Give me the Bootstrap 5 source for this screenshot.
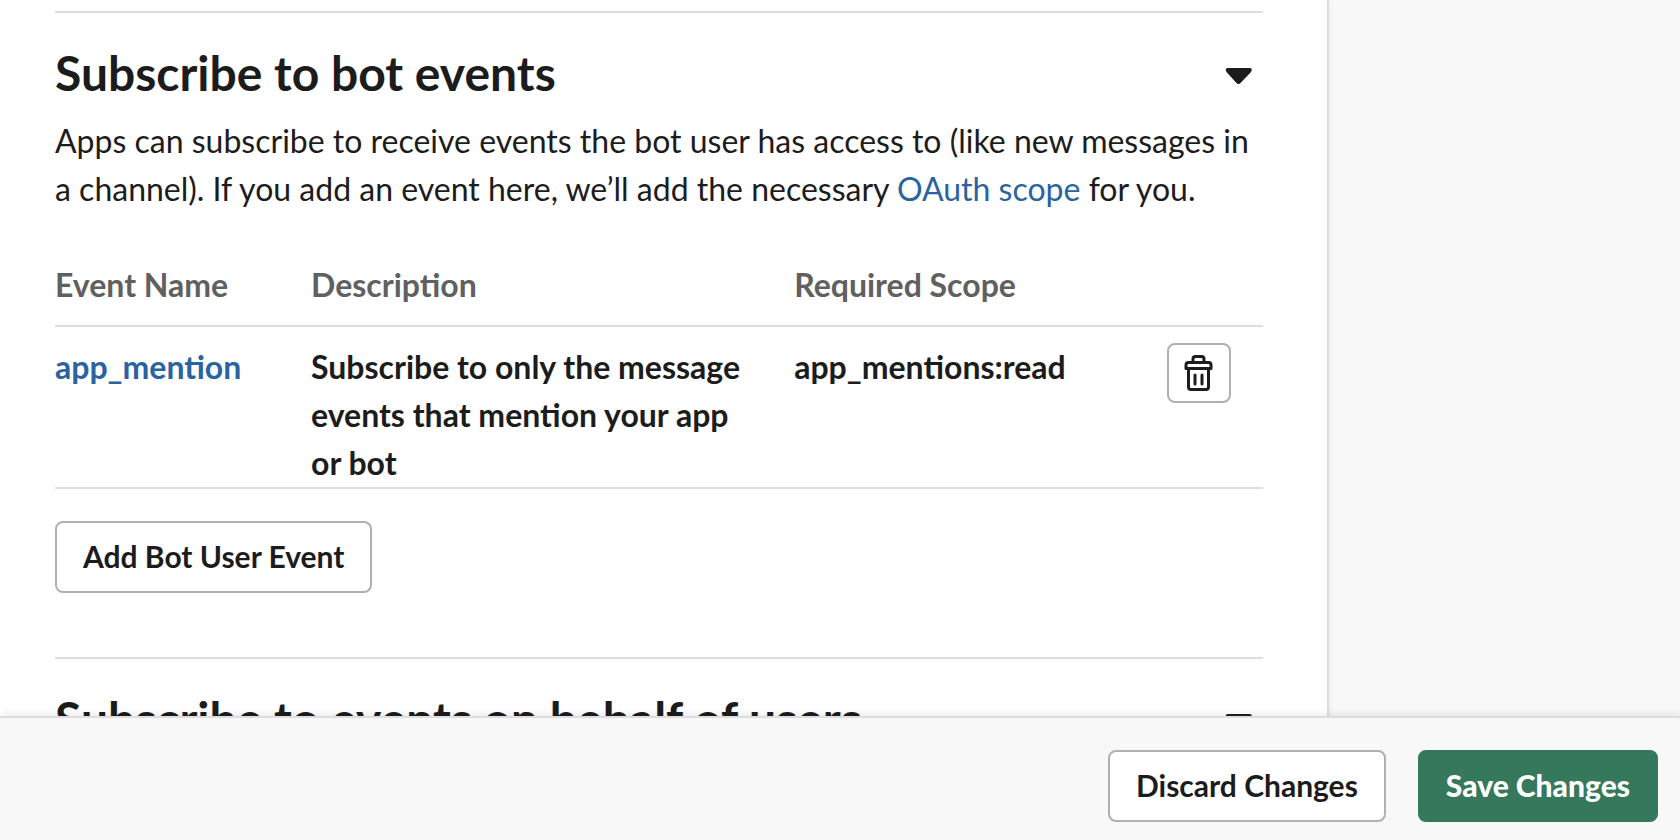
<!DOCTYPE html>
<html lang="en">
<head>
<meta charset="utf-8">
<meta name="viewport" content="width=device-width, initial-scale=1">
<title>Event Subscriptions</title>
<link href="https://cdn.jsdelivr.net/npm/bootstrap@5.3.0/dist/css/bootstrap.min.css" rel="stylesheet">
<style>
:root { --ink: #1d1c1d; --rule: #dddddd; --outline: #b0b0b0; --link: #2a639f; --panel: #f8f8f8; }
body { font-family: Lato, "Liberation Sans", sans-serif; font-size: 32px; line-height: 48px; color: var(--ink); background: var(--panel); }
a { color: var(--link); text-decoration: none; }
.page-side { width: 351px; }
.settings { padding: 11px 64px 64px 55px; border-right: 2px solid var(--rule); box-shadow: 0 0 6px rgba(0, 0, 0, .06); }
.event-group { border-top: 2px solid var(--rule); padding: 29px 0 64px; }
.event-group h2 { font-size: 48px; line-height: 62px; font-weight: 700; }
.event-group p { margin: 13px 0 48px; }
.caret { width: 50px; height: 32px; }
.event-table { --bs-table-color: var(--ink); --bs-table-bg: transparent; table-layout: fixed; margin-bottom: 32px; color: var(--ink); border-color: var(--rule); }
.event-table th, .event-table td { padding: 0; border-bottom: 2px solid var(--rule); font-weight: 700; vertical-align: top; }
.event-table th { color: #616061; padding-bottom: 16px; }
.event-table td { padding-top: 16px; }
.event-table .name-col { width: 256px; }
.event-table .text-col { width: 40%; }
.event-table .tool-col { width: 96px; }
.event-table .text-cell { padding-right: 48px; }
.btn { --bs-btn-font-size: 30px; --bs-btn-line-height: 44px; --bs-btn-font-weight: 700; --bs-btn-border-width: 2px; --bs-btn-border-radius: 8px; padding: 11px 26px 13px; font-weight: 700; }
.btn-plain { --bs-btn-color: var(--ink); --bs-btn-bg: #fff; --bs-btn-border-color: var(--outline); --bs-btn-hover-color: var(--ink); --bs-btn-hover-bg: #f8f8f8; --bs-btn-hover-border-color: var(--outline); }
.btn-save { --bs-btn-color: #fff; --bs-btn-bg: #35785b; --bs-btn-border-color: #35785b; --bs-btn-hover-color: #fff; --bs-btn-hover-bg: #2c664d; --bs-btn-hover-border-color: #2c664d; font-weight: 900; }
.btn-tool { width: 64px; height: 60px; padding: 0; }
.save-bar { z-index: 2; gap: 32px; padding: 32px 22px 18px; background: var(--panel); border-top: 2px solid var(--rule); box-shadow: 0 0 10px rgba(0, 0, 0, .12); }
</style>
</head>
<body>
<div class="vh-100 d-flex flex-column">
  <div class="flex-grow-1 d-flex overflow-hidden">
    <main class="settings bg-white flex-grow-1 align-self-start">
      <section class="event-group">
        <div class="d-flex justify-content-between align-items-center">
          <h2 class="mb-0">Subscribe to bot events</h2>
          <button class="caret border-0 bg-transparent p-0 d-flex" type="button" aria-label="Collapse bot events">
            <svg width="50" height="32" viewBox="0 0 50 32"><path d="M15 11h21.500q3.500 0 1.500 4l-10 10.500q-2.500 3-5 0l-9.500-10.500q-2-4 1.500-4z" fill="#1d1c1d"/></svg>
          </button>
        </div>
        <p>Apps can subscribe to receive events the bot user has access to (like new messages in a channel). If you add an event here, we’ll add the necessary <a href="#">OAuth scope</a> for you.</p>
        <table class="table event-table">
          <thead>
            <tr><th class="name-col" scope="col">Event Name</th><th class="text-col" scope="col">Description</th><th scope="col">Required Scope</th><th class="tool-col"></th></tr>
          </thead>
          <tbody>
            <tr>
              <td><a href="#">app_mention</a></td>
              <td class="text-cell">Subscribe to only the message events that mention your app or bot</td>
              <td>app_mentions:read</td>
              <td>
                <button class="btn btn-plain btn-tool d-flex align-items-center justify-content-center" type="button" aria-label="Delete app_mention">
                  <svg width="30" height="36" viewBox="0 0 30 36" fill="none" stroke="#1d1c1d" stroke-width="3" stroke-linecap="round" stroke-linejoin="round"><path d="M9 7V4q0-2.500 2.500-2.500h6q2.500 0 2.500 2.500v3M2 13.500V10q0-2.500 2.500-2.500h20q2.500 0 2.500 2.500v3.500zM4.500 14v18q0 2.500 2.500 2.500h15q2.500 0 2.500-2.500V14M11 20v9M18 20v9"/></svg>
                </button>
              </td>
            </tr>
          </tbody>
        </table>
        <button class="btn btn-plain d-block" type="button">Add Bot User Event</button>
      </section>
      <section class="event-group">
        <div class="d-flex justify-content-between align-items-center">
          <h2 class="mb-0">Subscribe to events on behalf of users</h2>
          <button class="caret border-0 bg-transparent p-0 d-flex" type="button" aria-label="Collapse user events">
            <svg width="50" height="32" viewBox="0 0 50 32"><path d="M15 11h21.500q3.500 0 1.500 4l-10 10.500q-2.500 3-5 0l-9.500-10.500q-2-4 1.500-4z" fill="#1d1c1d"/></svg>
          </button>
        </div>
      </section>
    </main>
    <div class="page-side flex-shrink-0"></div>
  </div>
  <footer class="save-bar d-flex justify-content-end">
    <button class="btn btn-plain" type="button">Discard Changes</button>
    <button class="btn btn-save" type="button">Save Changes</button>
  </footer>
</div>
<script src="https://cdn.jsdelivr.net/npm/bootstrap@5.3.0/dist/js/bootstrap.bundle.min.js"></script>
</body>
</html>
